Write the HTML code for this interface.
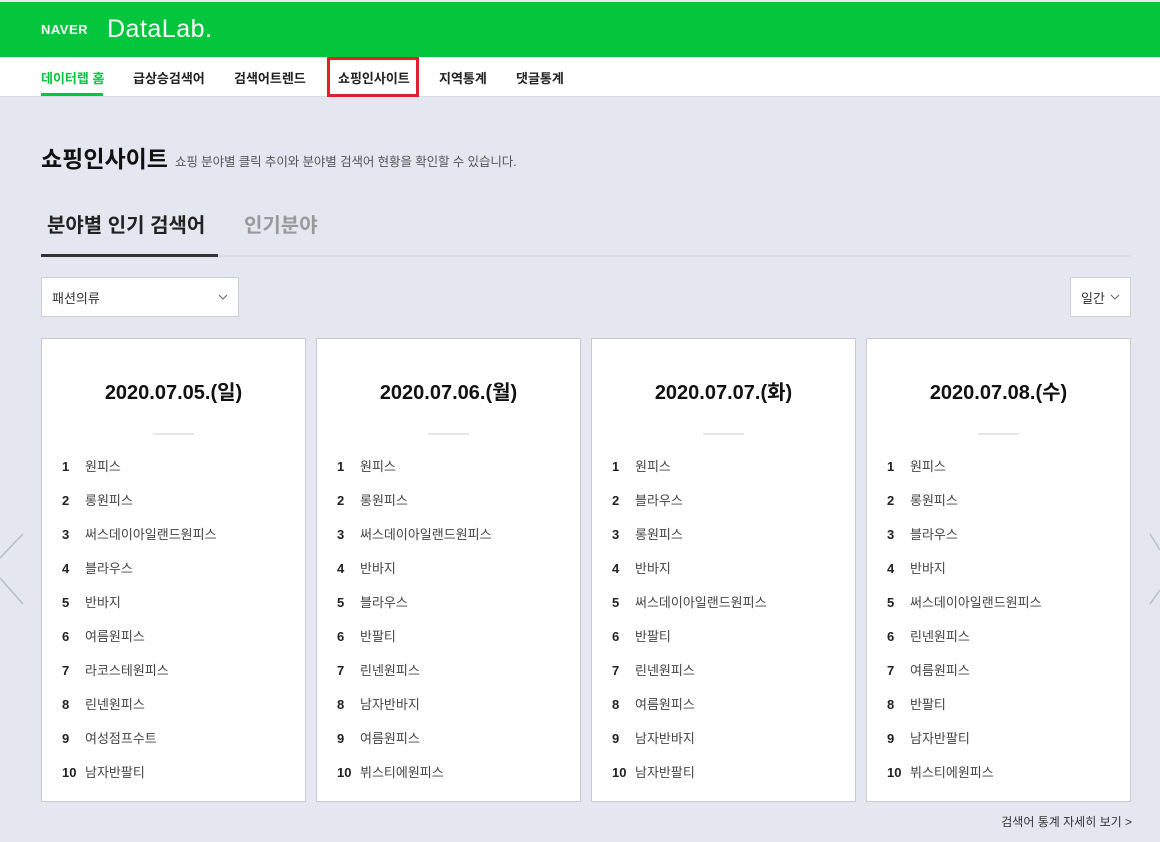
<!DOCTYPE html>
<html><head><meta charset="utf-8"><style>
*{margin:0;padding:0;box-sizing:border-box}
body{width:1160px;height:842px;overflow:hidden;background:#e4e7ef;font-family:"Liberation Sans","Noto Sans CJK KR",sans-serif;position:relative;color:#222}
.hd{position:absolute;left:0;top:2px;width:1160px;height:55px;background:#03c63c}
.naver{position:absolute;left:41px;top:20px;color:#fff;font-weight:900;font-size:13px;letter-spacing:.5px}
.dl{position:absolute;left:107px;top:13px;color:#fff;font-size:25px;font-weight:300;letter-spacing:.5px}
.nav{position:absolute;left:0;top:57px;width:1160px;height:40px;background:#fff;border-bottom:1px solid #d8dbe2}
.nav a{position:absolute;top:11px;font-size:13px;font-weight:bold;color:#222;text-decoration:none}
.nav .on{color:#03c63c}
.nav .ul{position:absolute;left:41px;top:36px;width:62px;height:3px;background:#03c63c}
.box{position:absolute;left:327px;top:57px;width:92px;height:40px;border:3px solid #e0202a}
.title{position:absolute;left:41px;top:140px;font-size:23px;font-weight:bold;color:#111}
.sub{position:absolute;left:175px;top:151px;font-size:12.5px;color:#555;letter-spacing:-.1px}
.tab1{position:absolute;left:47px;top:209px;font-size:20px;font-weight:bold;color:#222}
.tab2{position:absolute;left:244px;top:209px;font-size:20px;font-weight:bold;color:#999}
.tl{position:absolute;left:41px;top:255px;width:1090px;height:2px;background:#d8dce4}
.tl2{position:absolute;left:41px;top:254px;width:177px;height:3px;background:#333}
.sel{position:absolute;background:#fff;border:1px solid #ccd0d8;font-size:13px;color:#333}
.card{position:absolute;top:338px;width:265px;height:464px;background:#fff;border:1px solid #c5cad5}
.card h3{position:absolute;top:37px;width:100%;text-align:center;font-size:20px;font-weight:bold;color:#111}
.card .dv{position:absolute;top:94px;left:111px;width:41px;height:2px;background:#e6e7ea}
.card ul{position:absolute;top:117px;left:20px;list-style:none}
.card li{height:34px;font-size:13px;color:#444;white-space:nowrap}
.card li b{display:inline-block;width:23px;color:#222}
.more{position:absolute;right:28px;top:813px;font-size:12px;color:#333}
</style></head><body>
<div class="hd"><div class="naver">NAVER</div><div class="dl">DataLab.</div></div>
<div class="nav">
<a class="on" style="left:41px">데이터랩 홈</a><div class="ul"></div>
<a style="left:133px">급상승검색어</a>
<a style="left:234px">검색어트렌드</a>
<a style="left:338px">쇼핑인사이트</a>
<a style="left:439px">지역통계</a>
<a style="left:516px">댓글통계</a>
</div>
<div class="box"></div>
<div class="title">쇼핑인사이트</div>
<div class="sub">쇼핑 분야별 클릭 추이와 분야별 검색어 현황을 확인할 수 있습니다.</div>
<div class="tab1">분야별 인기 검색어</div><div class="tab2">인기분야</div>
<div class="tl"></div><div class="tl2"></div>
<div class="sel" style="left:41px;top:277px;width:198px;height:40px;padding:10px 10px">패션의류<svg style="position:absolute;right:10px;top:16px" width="10" height="6"><path d="M1 1l4 4 4-4" stroke="#666" fill="none"/></svg></div>
<div class="sel" style="left:1070px;top:277px;width:61px;height:40px;padding:10px 10px">일간<svg style="position:absolute;right:10px;top:16px" width="10" height="6"><path d="M1 1l4 4 4-4" stroke="#666" fill="none"/></svg></div>
<svg style="position:absolute;left:0;top:530px" width="30" height="80"><path d="M23 4L0 28M0 48L23 74" stroke="#b8bec8" stroke-width="1.5" fill="none"/></svg>
<svg style="position:absolute;left:1140px;top:530px" width="20" height="80"><path d="M10 4L20 20M20 60L10 74" stroke="#b8bec8" stroke-width="1.5" fill="none"/></svg>
<div class="card" style="left:41px"><h3>2020.07.05.(일)</h3><div class="dv"></div><ul>
<li><b>1</b>원피스</li><li><b>2</b>롱원피스</li><li><b>3</b>써스데이아일랜드원피스</li><li><b>4</b>블라우스</li><li><b>5</b>반바지</li><li><b>6</b>여름원피스</li><li><b>7</b>라코스테원피스</li><li><b>8</b>린넨원피스</li><li><b>9</b>여성점프수트</li><li><b>10</b>남자반팔티</li></ul></div>
<div class="card" style="left:316px"><h3>2020.07.06.(월)</h3><div class="dv"></div><ul>
<li><b>1</b>원피스</li><li><b>2</b>롱원피스</li><li><b>3</b>써스데이아일랜드원피스</li><li><b>4</b>반바지</li><li><b>5</b>블라우스</li><li><b>6</b>반팔티</li><li><b>7</b>린넨원피스</li><li><b>8</b>남자반바지</li><li><b>9</b>여름원피스</li><li><b>10</b>뷔스티에원피스</li></ul></div>
<div class="card" style="left:591px"><h3>2020.07.07.(화)</h3><div class="dv"></div><ul>
<li><b>1</b>원피스</li><li><b>2</b>블라우스</li><li><b>3</b>롱원피스</li><li><b>4</b>반바지</li><li><b>5</b>써스데이아일랜드원피스</li><li><b>6</b>반팔티</li><li><b>7</b>린넨원피스</li><li><b>8</b>여름원피스</li><li><b>9</b>남자반바지</li><li><b>10</b>남자반팔티</li></ul></div>
<div class="card" style="left:866px"><h3>2020.07.08.(수)</h3><div class="dv"></div><ul>
<li><b>1</b>원피스</li><li><b>2</b>롱원피스</li><li><b>3</b>블라우스</li><li><b>4</b>반바지</li><li><b>5</b>써스데이아일랜드원피스</li><li><b>6</b>린넨원피스</li><li><b>7</b>여름원피스</li><li><b>8</b>반팔티</li><li><b>9</b>남자반팔티</li><li><b>10</b>뷔스티에원피스</li></ul></div>
<div class="more">검색어 통계 자세히 보기 &gt;</div>
</body></html>
